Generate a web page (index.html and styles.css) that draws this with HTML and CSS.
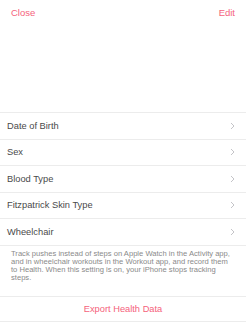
FILE: index.html
```html
<!DOCTYPE html>
<html>
<head>
<meta charset="utf-8">
<link rel="stylesheet" href="styles.css">
</head>
<body>
<div class="page">
  <header class="topbar">
    <span class="link">Close</span>
    <span class="link">Edit</span>
  </header>
  <div class="spacer"></div>
  <ul class="list">
    <li class="row"><span>Date of Birth</span><svg class="chev" viewBox="0 0 5 8"><path d="M1 1 L4 4 L1 7" /></svg></li>
    <li class="row"><span>Sex</span><svg class="chev" viewBox="0 0 5 8"><path d="M1 1 L4 4 L1 7" /></svg></li>
    <li class="row"><span>Blood Type</span><svg class="chev" viewBox="0 0 5 8"><path d="M1 1 L4 4 L1 7" /></svg></li>
    <li class="row"><span>Fitzpatrick Skin Type</span><svg class="chev" viewBox="0 0 5 8"><path d="M1 1 L4 4 L1 7" /></svg></li>
    <li class="row"><span>Wheelchair</span><svg class="chev" viewBox="0 0 5 8"><path d="M1 1 L4 4 L1 7" /></svg></li>
  </ul>
  <p class="note">Track pushes instead of steps on Apple Watch in the Activity app, and in wheelchair workouts in the Workout app, and record them to Health. When this setting is on, your iPhone stops tracking steps.</p>
  <div class="export"><span class="link">Export Health Data</span></div>
</div>
</body>
</html>
```
FILE: styles.css
```css
html, body {
  margin: 0;
  padding: 0;
  background: #ffffff;
}
.page {
  font-family: "Liberation Sans", Arial, sans-serif;
  width: 246px;
  height: 329px;
  overflow: hidden;
}
.topbar {
  height: 24px;
  display: flex;
  justify-content: space-between;
  align-items: center;
  padding: 0 11px;
}
.link {
  color: #f5627c;
  font-size: 9.5px;
}
.spacer {
  height: 88px;
}
.list {
  list-style: none;
  margin: 0;
  padding: 0;
  border-top: 1px solid #ececec;
}
.row {
  height: 25.5px;
  display: flex;
  align-items: center;
  justify-content: space-between;
  padding: 0 11px 0 7px;
  border-bottom: 1px solid #ececec;
  font-size: 9.3px;
  color: #4a4a4a;
}
.chev {
  width: 5px;
  height: 8px;
  fill: none;
  stroke: #c4c4c8;
  stroke-width: 1;
}
.note {
  margin: 0;
  padding: 4px 12px 0 11px;
  font-size: 7.6px;
  line-height: 8.3px;
  color: #8a8a8a;
  height: 50px;
  box-sizing: border-box;
}
.export {
  border-top: 1px solid #ececec;
  border-bottom: 1px solid #ececec;
  height: 24px;
  display: flex;
  align-items: center;
  justify-content: center;
}
.export .link {
  font-size: 9.3px;
}
```
